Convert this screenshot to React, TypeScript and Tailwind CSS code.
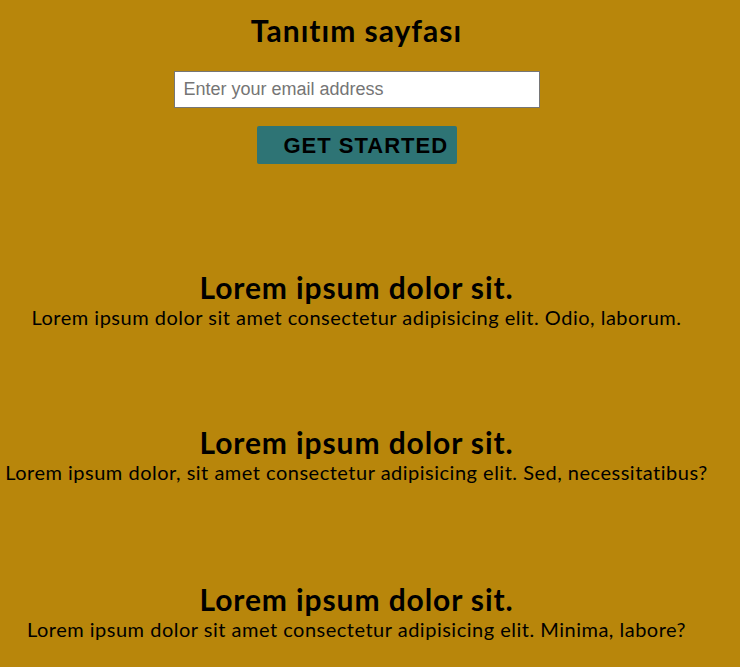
import React from 'react';

const sections = [
  { text: 'Lorem ipsum dolor sit amet consectetur adipisicing elit. Odio, laborum.', gap: '' },
  { text: 'Lorem ipsum dolor, sit amet consectetur adipisicing elit. Sed, necessitatibus?', gap: 'mt-[95px]' },
  { text: 'Lorem ipsum dolor sit amet consectetur adipisicing elit. Minima, labore?', gap: 'mt-[97px]' },
];

const App = () => {
  return (
    <div className="min-h-screen bg-[#b8860b] text-black font-['Lato',sans-serif]">
      <div className="w-[713px]">
        <header className="flex flex-col items-center pt-[10px]">
          <h1 className="text-[30px] leading-[40px] font-bold tracking-[1px]">Tanıtım sayfası</h1>
          <input
            type="email"
            placeholder="Enter your email address"
            className="mt-[21px] w-[366px] h-[37px] bg-white border border-[#767676] px-[9px] text-[18px] font-['Liberation_Sans',sans-serif] placeholder:text-[#757575] outline-none"
          />
          <button className="mt-[18px] w-[200px] h-[38px] bg-[#2e7475] rounded-[2px] pl-[27px] text-left text-[22px] font-bold tracking-[1px] font-['Liberation_Sans',sans-serif] text-black">
            GET STARTED
          </button>
        </header>

        <main className="flex flex-col items-center pt-[105px]">
          {sections.map((s, i) => (
            <section key={i} className={`text-center ${s.gap}`}>
              <h2 className="text-[30px] leading-[36px] font-bold tracking-[0.9px]">Lorem ipsum dolor sit.</h2>
              <p className="text-[20px] leading-[24px] tracking-[0.5px] whitespace-nowrap">{s.text}</p>
            </section>
          ))}
        </main>
      </div>
    </div>
  );
};

export default App;
